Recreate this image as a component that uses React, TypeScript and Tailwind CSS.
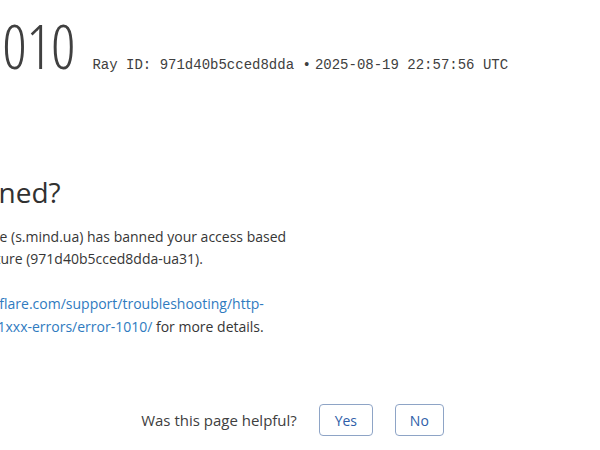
export default function App(): React.ReactElement {
  return (
    <div className="h-[450px] w-[600px] overflow-hidden bg-white font-['Open_Sans','Noto_Sans',sans-serif] text-[#404040] antialiased">
      {/* Main column, scrolled off to the left */}
      <div className="-ml-[160px] w-[445px]">
        <header className="flex items-baseline whitespace-nowrap pt-[9px]">
          <h1 className="mr-[17px] text-[60px] font-light leading-[75px] text-[#404040] [font-stretch:condensed]">
            <span>Error</span> <span className="ml-[28px]">1010</span>
          </h1>
          <span className="font-['Liberation_Mono','Courier_New',monospace] text-[14px] text-[#404040]">
            Ray ID: 971d40b5cced8dda •
          </span>
          <span className="ml-1 font-['Liberation_Mono','Courier_New',monospace] text-[14px] text-[#404040]">
            2025-08-19 22:57:56 UTC
          </span>
        </header>

        <section className="mt-[90px]">
          <h2 className="mb-[14px] text-[28px] font-normal leading-[37.5px] text-[#313131]">
            What happened?
          </h2>
          <p className="whitespace-nowrap text-[14px] leading-[22.5px] text-[#363636]">
            The owner of this website (s.mind.ua) has banned your access based
            <br />
            on your browser&apos;s signature (971d40b5cced8dda-ua31).
          </p>
          <p className="whitespace-nowrap text-[14px] leading-[22.5px] text-[#363636]">
            Please see
            <br />
            <a
              href="#"
              className="text-[#2f7bbf] no-underline hover:underline"
            >
              https://developers.cloudflare.com/support/troubleshooting/http-
              <br />
              status-codes/cloudflare-1xxx-errors/error-1010/
            </a>{" "}
            for more details.
          </p>
        </section>
      </div>

      {/* Feedback */}
      <div className="mt-[66px] flex w-[585px] items-center justify-center gap-[22px] text-[15px] text-[#404040]">
        <span>Was this page helpful?</span>
        <button
          type="button"
          className="h-8 w-[54px] rounded-[4px] border border-[#8ea4c6] bg-white text-[14px] text-[#2f5ea8]"
        >
          Yes
        </button>
        <button
          type="button"
          className="h-8 w-[49px] rounded-[4px] border border-[#8ea4c6] bg-white text-[14px] text-[#2f5ea8]"
        >
          No
        </button>
      </div>
    </div>
  );
}
